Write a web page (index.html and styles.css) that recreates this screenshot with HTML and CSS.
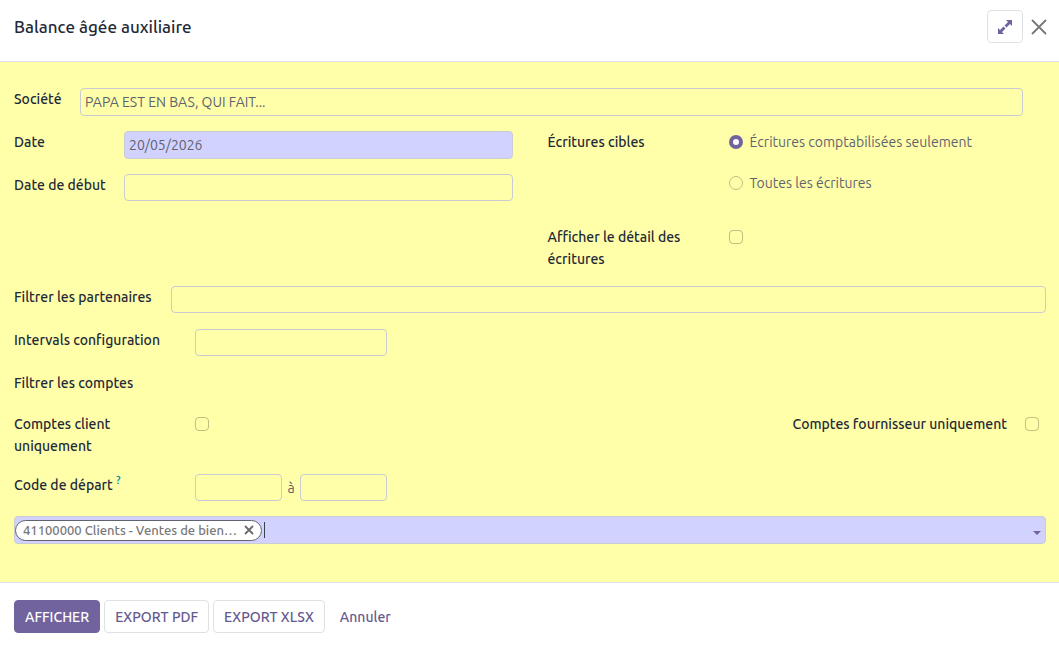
FILE: index.html
```html
<!DOCTYPE html>
<html lang="fr">
<head>
  <meta charset="UTF-8">
  <meta name="viewport" content="width=device-width, initial-scale=1">
  <title>Balance âgée auxiliaire</title>
  <link rel="stylesheet" href="styles.css">
</head>
<body>
  <header class="dialog-header">
    <h1>Balance âgée auxiliaire</h1>
    <button type="button" class="btn-expand" aria-label="Agrandir">
      <svg width="16" height="16" viewBox="0 0 16 16">
        <path d="M9 1h6v6l-2-2-3.500 3.500-2-2L11 3zM1 15V9l2 2 3.500-3.500 2 2L5 13l2 2z" fill="#71639e"/>
      </svg>
    </button>
    <button type="button" class="btn-close" aria-label="Fermer">
      <svg width="16" height="16" viewBox="0 0 16 16">
        <path d="M1.500 1.500l13 13M14.500 1.500l-13 13" stroke="#777" stroke-width="1.800" stroke-linecap="round"/>
      </svg>
    </button>
  </header>

  <form class="dialog-body" id="balanceForm">
    <div class="row row-company">
      <label for="societe">Société</label>
      <input type="text" id="societe" name="societe" value="PAPA EST EN BAS, QUI FAIT...">
    </div>

    <div class="columns">
      <div class="column">
        <div class="row row-date">
          <label for="date">Date</label>
          <input type="text" id="date" name="date" class="required" value="20/05/2026">
        </div>
        <div class="row row-date">
          <label for="dateDebut">Date de début</label>
          <input type="text" id="dateDebut" name="dateDebut">
        </div>
      </div>

      <div class="column">
        <div class="row row-wide" role="radiogroup" aria-labelledby="cibles">
          <span class="label" id="cibles">Écritures cibles</span>
          <div class="radios">
            <div class="choice">
              <input type="radio" id="comptabilisees" name="cibles" checked>
              <label for="comptabilisees">Écritures comptabilisées seulement</label>
            </div>
            <div class="choice">
              <input type="radio" id="toutes" name="cibles">
              <label for="toutes">Toutes les écritures</label>
            </div>
          </div>
        </div>
        <div class="row row-wide">
          <label for="detail">Afficher le détail des écritures</label>
          <input type="checkbox" id="detail" name="detail">
        </div>
      </div>
    </div>

    <div class="row row-partners">
      <label for="partenaires">Filtrer les partenaires</label>
      <input type="text" id="partenaires" name="partenaires">
    </div>

    <div class="row row-wide">
      <label for="intervals">Intervals configuration</label>
      <input type="text" id="intervals" name="intervals" class="medium">
    </div>

    <div class="row row-title">
      <span class="label">Filtrer les comptes</span>
    </div>

    <div class="accounts">
      <div class="row row-client">
        <label for="client">Comptes client uniquement</label>
        <input type="checkbox" id="client" name="client">
      </div>
      <div class="row row-supplier">
        <label for="fournisseur">Comptes fournisseur uniquement</label>
        <input type="checkbox" id="fournisseur" name="fournisseur">
      </div>
    </div>

    <div class="row row-wide row-code">
      <label for="codeDebut">Code de départ <sup>?</sup></label>
      <div class="range medium">
        <input type="text" id="codeDebut" name="codeDebut">
        <span>à</span>
        <input type="text" name="codeFin" aria-label="Code de fin">
      </div>
    </div>

    <div class="tags required">
      <span class="tag">
        <span>41100000 Clients - Ventes de bien…</span>
        <button type="button" aria-label="Retirer">
          <svg width="10" height="10" viewBox="0 0 10 10">
            <path d="M1 1l8 8M9 1l-8 8" stroke="#6b6b6b" stroke-width="1.800"/>
          </svg>
        </button>
      </span>
      <span class="cursor"></span>
      <input type="text" name="comptes" aria-label="Comptes">
      <span class="arrow"></span>
    </div>
  </form>

  <footer class="dialog-footer">
    <button type="submit" form="balanceForm" class="btn btn-primary">AFFICHER</button>
    <button type="button" class="btn">EXPORT PDF</button>
    <button type="button" class="btn">EXPORT XLSX</button>
    <button type="button" class="btn btn-link">Annuler</button>
  </footer>
</body>
</html>
```
FILE: styles.css
```css
* {
  box-sizing: border-box;
}

body {
  margin: 0;
  min-height: 100vh;
  display: flex;
  flex-direction: column;
  font-family: Ubuntu, "Noto Sans", sans-serif;
  font-size: 14px;
  line-height: 22px;
  color: #5f636f;
  background-color: white;
}

button,
input {
  font: inherit;
  color: inherit;
}

button {
  cursor: pointer;
}

.dialog-header {
  display: flex;
  align-items: center;
  padding: 10px 12px 18px 14px;
  border-bottom: 1px solid #dee2e6;
}

.dialog-header h1 {
  flex: 1;
  margin: 0;
  font-size: 17px;
  font-weight: 500;
  color: #1f2937;
}

.btn-expand,
.btn-close {
  display: flex;
  align-items: center;
  justify-content: center;
  background-color: white;
}

.btn-expand {
  width: 36px;
  height: 33px;
  padding: 0;
  border: 1px solid #dee2e6;
  border-radius: 4px;
}

.btn-close {
  margin-left: 8px;
  padding: 0;
  border: none;
}

.dialog-body {
  flex: 1;
  display: flex;
  flex-direction: column;
  gap: 15px;
  padding: 26px 13px 38px 14px;
  background-color: #ffffaa;
}

.row {
  display: grid;
  align-items: start;
  min-height: 28px;
}

.row > label,
.row > .label {
  font-weight: 500;
  color: #1f2937;
}

.row-company {
  grid-template-columns: 66px 1fr;
  padding-right: 23px;
}

.row-date {
  grid-template-columns: 110px 1fr;
}

.row-wide {
  grid-template-columns: 181px 1fr;
}

.row-wide > label {
  padding-right: 24px;
}

.row-partners {
  grid-template-columns: 157px 1fr;
}

.row-title {
  min-height: 26px;
}

.row-code {
  min-height: 27px;
}

.columns {
  display: grid;
  grid-template-columns: 1fr 1fr;
  gap: 35px;
  padding-bottom: 1px;
}

.column {
  display: flex;
  flex-direction: column;
  gap: 15px;
}

.columns .row-wide + .row-wide {
  margin-top: 17px;
}

.radios {
  display: flex;
  flex-direction: column;
  gap: 19px;
}

.choice {
  display: flex;
  gap: 7px;
}

input[type="text"] {
  width: 100%;
  height: 27px;
  padding: 0 4px;
  border: 1px solid #c9ccd2;
  border-radius: 4px;
  background-color: transparent;
}

.row-company input[type="text"],
input[type="text"].required {
  height: 28px;
}

.medium,
input[type="text"].medium {
  width: 192px;
}

.required,
input[type="text"].required {
  background-color: #d2d2ff;
}

input[type="radio"],
input[type="checkbox"] {
  appearance: none;
  flex: none;
  width: 14px;
  height: 14px;
  margin: 4px 0;
  border: 1px solid #bfbf80;
  border-radius: 4px;
}

input[type="radio"] {
  border-radius: 50%;
}

input[type="radio"]:checked {
  border: 4px solid #71639e;
  background-color: white;
}

.accounts {
  display: flex;
  justify-content: space-between;
  padding-bottom: 2px;
}

.row-client {
  grid-template-columns: 120px 14px;
  column-gap: 61px;
}

.row-supplier {
  grid-template-columns: auto 14px;
  column-gap: 18px;
  padding-right: 7px;
}

sup {
  font-size: 11px;
  line-height: 0;
  color: #0180a5;
}

.range {
  display: flex;
  align-items: center;
  justify-content: space-between;
}

.range input[type="text"] {
  width: 87px;
}

.tags {
  display: flex;
  align-items: center;
  height: 28px;
  padding-right: 4px;
  border: 1px solid #c9ccd2;
  border-radius: 4px;
}

.tags input[type="text"] {
  flex: 1;
  border: none;
}

.tag {
  display: flex;
  align-items: center;
  gap: 7px;
  height: 21px;
  padding: 0 7px;
  border: 1px solid #5f636f;
  border-radius: 11px;
  background-color: white;
  font-size: 13px;
  font-weight: 500;
  color: #777;
}

.tag button {
  display: flex;
  padding: 0;
  border: none;
  background: none;
}

.cursor {
  width: 1px;
  height: 16px;
  margin-left: 2px;
  background-color: #374151;
}

.arrow {
  margin-top: 6px;
  border-top: 4px solid #71639e;
  border-left: 4px solid transparent;
  border-right: 4px solid transparent;
}

.dialog-footer {
  display: flex;
  gap: 4px;
  padding: 17px 14px 12px;
  border-top: 1px solid #dee2e6;
}

.btn {
  height: 33px;
  padding: 0 10px;
  border: 1px solid #dee2e6;
  border-radius: 4px;
  background-color: white;
  font-weight: 500;
  color: #66598f;
}

.btn-primary {
  border-color: #71639e;
  background-color: #71639e;
  color: white;
}

.btn-link {
  border-color: transparent;
}
```
